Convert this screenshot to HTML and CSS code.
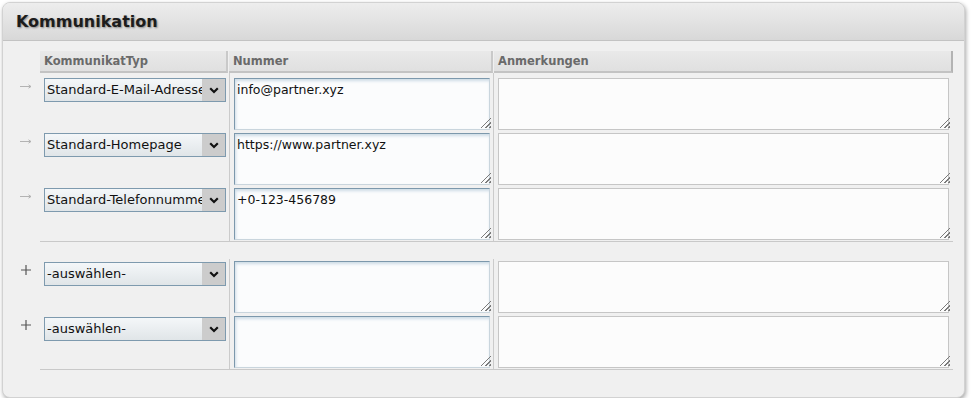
FILE: index.html
```html
<!DOCTYPE html>
<html lang="de">
<head>
<meta charset="utf-8">
<title>Kommunikation</title>
<link rel="stylesheet" href="styles.css">
</head>
<body>
<div class="panel">
  <div class="panel-head"><h2 class="title">Kommunikation</h2></div>
  <div class="panel-body">
    <div class="thead">
      <div class="th th-typ">KommunikatTyp</div>
      <div class="th th-num">Nummer</div>
      <div class="th th-note">Anmerkungen</div>
    </div>

    <div class="group">
      <div class="row">
        <div class="c-icon"><svg class="arrow" width="12" height="5" viewBox="0 0 12 5"><path d="M0 2.5H11M8.5 0.8L11 2.5L8.5 4.2" fill="none" stroke="#b3b3b3" stroke-width="1"/></svg></div>
        <div class="c-typ"><div class="sel"><span class="sel-text">Standard-E-Mail-Adresse</span><span class="sel-btn"><svg width="10" height="7" viewBox="0 0 10 7"><path d="M1.2 1.3L5 5L8.8 1.3" fill="none" stroke="#111" stroke-width="2.2"/></svg></span></div></div>
        <div class="c-num"><div class="ta-wrap"><textarea class="ta ta-num">info@partner.xyz</textarea></div></div>
        <div class="c-note"><div class="ta-wrap"><textarea class="ta ta-note"></textarea></div></div>
      </div>
      <div class="row">
        <div class="c-icon"><svg class="arrow" width="12" height="5" viewBox="0 0 12 5"><path d="M0 2.5H11M8.5 0.8L11 2.5L8.5 4.2" fill="none" stroke="#b3b3b3" stroke-width="1"/></svg></div>
        <div class="c-typ"><div class="sel"><span class="sel-text">Standard-Homepage</span><span class="sel-btn"><svg width="10" height="7" viewBox="0 0 10 7"><path d="M1.2 1.3L5 5L8.8 1.3" fill="none" stroke="#111" stroke-width="2.2"/></svg></span></div></div>
        <div class="c-num"><div class="ta-wrap"><textarea class="ta ta-num">https://www.partner.xyz</textarea></div></div>
        <div class="c-note"><div class="ta-wrap"><textarea class="ta ta-note"></textarea></div></div>
      </div>
      <div class="row">
        <div class="c-icon"><svg class="arrow" width="12" height="5" viewBox="0 0 12 5"><path d="M0 2.5H11M8.5 0.8L11 2.5L8.5 4.2" fill="none" stroke="#b3b3b3" stroke-width="1"/></svg></div>
        <div class="c-typ"><div class="sel"><span class="sel-text">Standard-Telefonnummer</span><span class="sel-btn"><svg width="10" height="7" viewBox="0 0 10 7"><path d="M1.2 1.3L5 5L8.8 1.3" fill="none" stroke="#111" stroke-width="2.2"/></svg></span></div></div>
        <div class="c-num"><div class="ta-wrap"><textarea class="ta ta-num">+0-123-456789</textarea></div></div>
        <div class="c-note"><div class="ta-wrap"><textarea class="ta ta-note"></textarea></div></div>
      </div>
    </div>
    <div class="sep"></div>

    <div class="group group-new">
      <div class="row">
        <div class="c-icon"><svg class="plus" width="10" height="10" viewBox="0 0 10 10"><path d="M5 0V10M0 5H10" fill="none" stroke="#555" stroke-width="1.2"/></svg></div>
        <div class="c-typ"><div class="sel"><span class="sel-text">-auswählen-</span><span class="sel-btn"><svg width="10" height="7" viewBox="0 0 10 7"><path d="M1.2 1.3L5 5L8.8 1.3" fill="none" stroke="#111" stroke-width="2.2"/></svg></span></div></div>
        <div class="c-num"><div class="ta-wrap"><textarea class="ta ta-num"></textarea></div></div>
        <div class="c-note"><div class="ta-wrap"><textarea class="ta ta-note"></textarea></div></div>
      </div>
      <div class="row">
        <div class="c-icon"><svg class="plus" width="10" height="10" viewBox="0 0 10 10"><path d="M5 0V10M0 5H10" fill="none" stroke="#555" stroke-width="1.2"/></svg></div>
        <div class="c-typ"><div class="sel"><span class="sel-text">-auswählen-</span><span class="sel-btn"><svg width="10" height="7" viewBox="0 0 10 7"><path d="M1.2 1.3L5 5L8.8 1.3" fill="none" stroke="#111" stroke-width="2.2"/></svg></span></div></div>
        <div class="c-num"><div class="ta-wrap"><textarea class="ta ta-num"></textarea></div></div>
        <div class="c-note"><div class="ta-wrap"><textarea class="ta ta-note"></textarea></div></div>
      </div>
    </div>
    <div class="sep"></div>
  </div>
</div>
</body>
</html>
```
FILE: styles.css
```css
* { box-sizing: border-box; }
html, body { margin: 0; padding: 0; background: #ffffff; }
body {
  font-family: "DejaVu Sans", Verdana, sans-serif;
  font-size: 12px;
  color: #111;
}
.panel {
  margin: 2px 0 0 2px;
  width: 963px;
  border: 1px solid #d2d2d2;
  border-radius: 8px;
  background: #f0f0f0;
  box-shadow: 1px 2px 4px rgba(0, 0, 0, 0.35);
  overflow: hidden;
}
.panel-head {
  height: 38px;
  background: linear-gradient(#ededed, #d8d8d8);
  border-bottom: 1px solid #c3c3c3;
  padding-left: 13px;
  display: flex;
  align-items: center;
}
.title {
  margin: 0;
  font-size: 16px;
  font-weight: bold;
  color: #1c1c1c;
  text-shadow: 1px 1px 2px rgba(0, 0, 0, 0.4);
  line-height: 20px;
}
.panel-body {
  padding: 10px 11px 27px 0;
}
.thead {
  margin-left: 37px;
  display: flex;
  gap: 1px;
  height: 22px;
}
.th {
  height: 22px;
  background: linear-gradient(#e9e9e9, #e0e0e0);
  border-right: 2px solid #c9c9c9;
  border-bottom: 2px solid #c3c3c3;
  padding-left: 4px;
  font-size: 11.5px;
  font-weight: bold;
  color: #6a6a6a;
  line-height: 20px;
  white-space: nowrap;
}
.th-typ { width: 188px; }
.th-num { width: 264px; }
.th-note { width: 459px; border-right-color: #b3b3b3; }
.row {
  display: grid;
  grid-template-columns: 37px 189px 264px 459px;
}
.row > div { padding-top: 2px; padding-bottom: 1px; }
.group > .row:first-child > div { padding-top: 5px; }
.group-new { margin-top: 17px; }
.group-new > .row:first-child > div { padding-top: 2px; }
.c-icon { padding-left: 17px; }
.arrow { display: block; margin-top: 6px; }
.plus { display: block; margin-top: 4px; margin-left: 1px; }
.c-typ { padding-left: 4px; }
.c-num { border-left: 1px solid #cbcbcb; padding-left: 4px; }
.c-note { border-left: 1px solid #cbcbcb; padding-left: 4px; }
.sel {
  width: 182px;
  height: 24px;
  border: 1px solid #7e9aae;
  background: linear-gradient(#f4f7f9, #e0e5e8);
  display: flex;
  align-items: stretch;
  overflow: hidden;
}
.group-new .sel { margin-top: 1px; }
.sel-text {
  flex: 1;
  min-width: 0;
  padding-left: 2px;
  line-height: 22px;
  font-size: 13px;
  white-space: nowrap;
  overflow: hidden;
  color: #111;
}
.sel-btn {
  width: 23px;
  flex: none;
  background: #cccccc;
  display: flex;
  align-items: center;
  justify-content: center;
}
.ta-wrap { position: relative; }
.ta {
  display: block;
  height: 52px;
  margin: 0;
  padding: 3px 2px 2px;
  font-family: "DejaVu Sans", Verdana, sans-serif;
  font-size: 12.5px;
  line-height: 16px;
  color: #111;
  resize: none;
  outline: none;
  overflow: hidden;
}
.ta-num {
  width: 256px;
  background: #fbfcfd;
  border: 1px solid;
  border-color: #7c98ac #c9d5dd #c9d5dd #7c98ac;
  box-shadow: inset 1px 2px 3px rgba(120, 160, 190, 0.35);
}
.ta-note {
  width: 451px;
  background: #fcfcfc;
  border: 1px solid #c6c6c6;
}
.ta-wrap::after {
  content: "";
  position: absolute;
  right: 2px;
  bottom: 2px;
  width: 13px;
  height: 13px;
  background: repeating-linear-gradient(135deg, transparent 0 1.8px, #7b7b7b 1.8px 3px);
  clip-path: polygon(100% 0, 100% 100%, 0 100%);
}
.sep {
  margin-left: 37px;
  height: 1px;
  background: #c9c9c9;
}
```
